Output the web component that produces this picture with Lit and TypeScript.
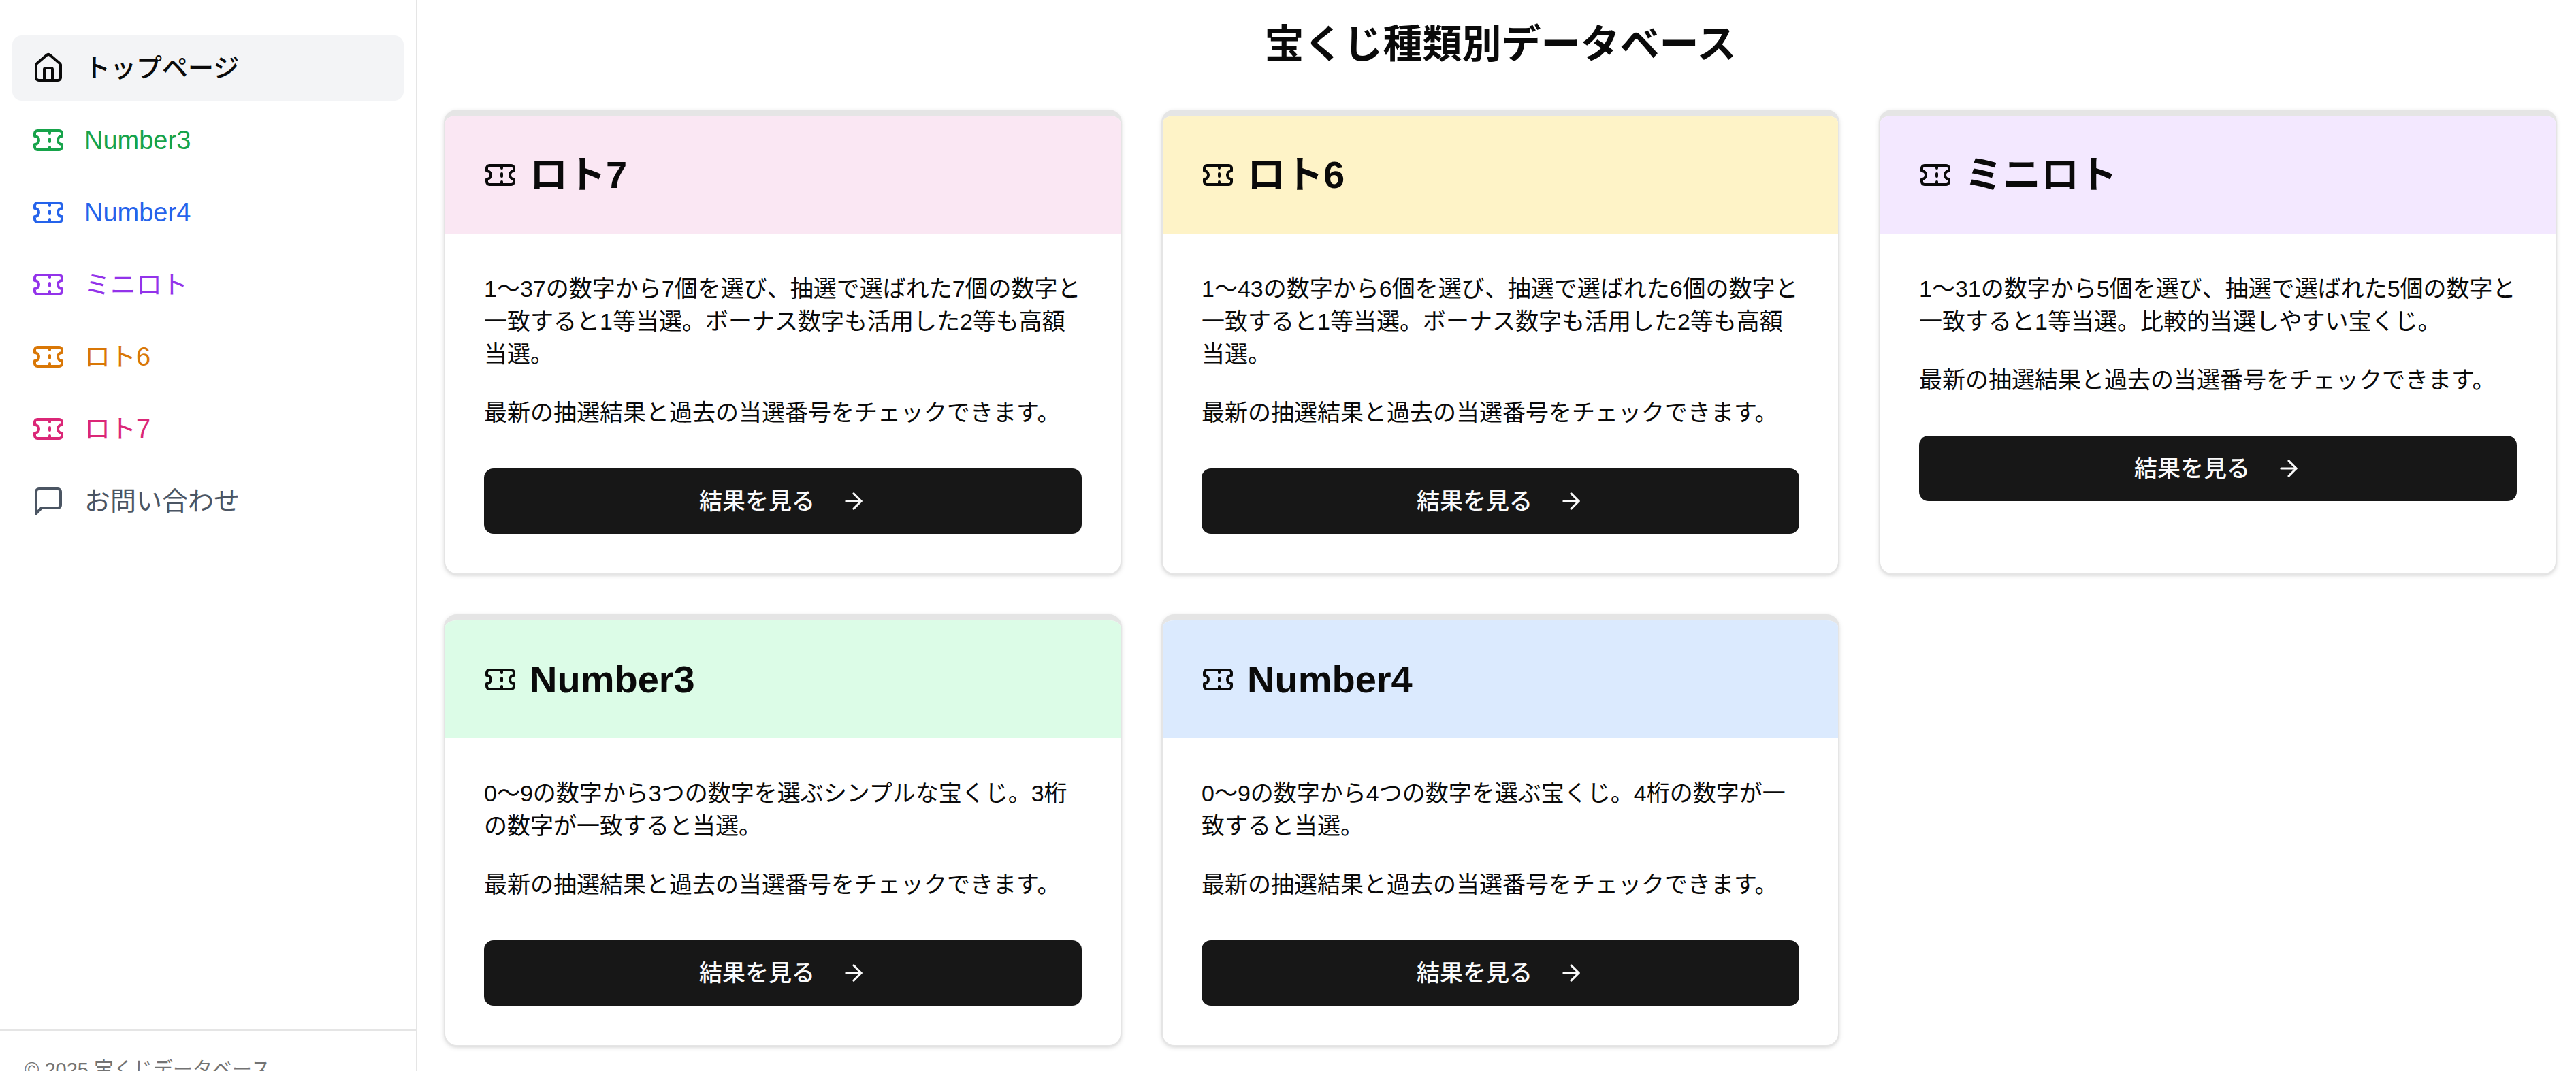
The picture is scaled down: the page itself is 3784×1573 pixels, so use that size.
import { LitElement, html, css, svg } from "lit";
import { customElement } from "lit/decorators.js";
import { classMap } from "lit/directives/class-map.js";

interface NavItem {
  label: string;
  icon: "home" | "ticket" | "message";
  tone: string;
  href: string;
}

interface Lottery {
  name: string;
  tone: string;
  description: string;
  href: string;
}

const NAV: NavItem[] = [
  { label: "トップページ", icon: "home", tone: "active", href: "#top" },
  { label: "Number3", icon: "ticket", tone: "green", href: "#number3" },
  { label: "Number4", icon: "ticket", tone: "blue", href: "#number4" },
  { label: "ミニロト", icon: "ticket", tone: "purple", href: "#miniloto" },
  { label: "ロト6", icon: "ticket", tone: "amber", href: "#loto6" },
  { label: "ロト7", icon: "ticket", tone: "pink", href: "#loto7" },
  { label: "お問い合わせ", icon: "message", tone: "gray", href: "#contact" },
];

const LOTTERIES: Lottery[] = [
  {
    name: "ロト7",
    tone: "pink",
    description:
      "1～37の数字から7個を選び、抽選で選ばれた7個の数字と一致すると1等当選。ボーナス数字も活用した2等も高額当選。",
    href: "#loto7",
  },
  {
    name: "ロト6",
    tone: "amber",
    description:
      "1～43の数字から6個を選び、抽選で選ばれた6個の数字と一致すると1等当選。ボーナス数字も活用した2等も高額当選。",
    href: "#loto6",
  },
  {
    name: "ミニロト",
    tone: "purple",
    description:
      "1～31の数字から5個を選び、抽選で選ばれた5個の数字と一致すると1等当選。比較的当選しやすい宝くじ。",
    href: "#miniloto",
  },
  {
    name: "Number3",
    tone: "green",
    description:
      "0～9の数字から3つの数字を選ぶシンプルな宝くじ。3桁の数字が一致すると当選。",
    href: "#number3",
  },
  {
    name: "Number4",
    tone: "blue",
    description:
      "0～9の数字から4つの数字を選ぶ宝くじ。4桁の数字が一致すると当選。",
    href: "#number4",
  },
];

const SHAPES = {
  home: svg`
    <path d="M15 21v-8a1 1 0 0 0-1-1h-4a1 1 0 0 0-1 1v8"></path>
    <path d="M3 10a2 2 0 0 1 .709-1.528l7-5.999a2 2 0 0 1 2.582 0l7 5.999A2 2 0 0 1 21 10v9a2 2 0 0 1-2 2H5a2 2 0 0 1-2-2z"></path>`,
  ticket: svg`
    <path d="M2 9a3 3 0 0 1 0 6v2a2 2 0 0 0 2 2h16a2 2 0 0 0 2-2v-2a3 3 0 0 1 0-6V7a2 2 0 0 0-2-2H4a2 2 0 0 0-2 2Z"></path>
    <path d="M13 5v2"></path>
    <path d="M13 17v2"></path>
    <path d="M13 11v2"></path>`,
  message: svg`
    <path d="M21 15a2 2 0 0 1-2 2H7l-4 4V5a2 2 0 0 1 2-2h14a2 2 0 0 1 2 2z"></path>`,
  arrow: svg`
    <path d="M5 12h14"></path>
    <path d="m12 5 7 7-7 7"></path>`,
};

const icon = (name: keyof typeof SHAPES, size = "large") => html`
  <svg class="icon ${size}" viewBox="0 0 24 24" aria-hidden="true">${SHAPES[name]}</svg>
`;

@customElement("app-root")
export class AppRoot extends LitElement {
  static styles = css`
    :host {
      display: block;
      background: #ffffff;
      color: #0a0a0a;
      font-family: "Liberation Sans", "Noto Sans CJK JP", sans-serif;
    }
    *,
    *::before,
    *::after {
      box-sizing: border-box;
    }
    h1,
    h2,
    p,
    ul {
      margin: 0;
      padding: 0;
    }
    a {
      color: inherit;
      text-decoration: none;
    }
    .shell {
      display: grid;
      grid-template-columns: 613px minmax(0, 1fr);
      height: 100vh;
      overflow: hidden;
    }
    .icon {
      flex: none;
      fill: none;
      stroke: currentColor;
      stroke-width: 2;
      stroke-linecap: round;
      stroke-linejoin: round;
    }
    .large {
      width: 48px;
      height: 48px;
    }
    .small {
      width: 38px;
      height: 38px;
    }

    /* The sidebar runs past the fold, so its footer is cut by the window. */
    .sidebar {
      display: flex;
      flex-direction: column;
      height: calc(100vh + 55px);
      border-right: 2px solid #e5e5e5;
    }
    .nav {
      flex: 1;
      padding: 52px 18px 0;
    }
    .nav-list {
      display: grid;
      gap: 10px;
      list-style: none;
    }
    .nav-link {
      display: flex;
      align-items: center;
      gap: 29px;
      height: 96px;
      padding: 0 29px;
      border-radius: 14px;
      font-size: 38px;
      line-height: 58px;
    }
    .nav-link.active {
      background: #f3f4f6;
      font-weight: 500;
    }
    .nav-link.green {
      color: #16a34a;
    }
    .nav-link.blue {
      color: #2563eb;
    }
    .nav-link.purple {
      color: #9333ea;
    }
    .nav-link.amber {
      color: #d97706;
    }
    .nav-link.pink {
      color: #db2777;
    }
    .nav-link.gray {
      color: #4b5563;
    }
    .footer {
      padding: 38px 36px;
      border-top: 2px solid #e5e5e5;
      color: #737373;
      font-size: 29px;
      line-height: 38px;
    }

    .main {
      padding: 29px 28px 29px 39px;
      overflow-y: auto;
    }
    .title {
      margin-bottom: 60px;
      font-size: 58px;
      font-weight: 700;
      line-height: 72px;
      text-align: center;
    }
    .cards {
      display: grid;
      grid-template-columns: repeat(3, minmax(0, 1fr));
      gap: 58px;
    }
    .card {
      overflow: hidden;
      border: 2px solid #e5e5e5;
      border-top-width: 9px;
      border-radius: 19px;
      background: #ffffff;
      box-shadow: 0 2px 7px rgb(0 0 0 / 0.1), 0 2px 5px -2px rgb(0 0 0 / 0.1);
    }
    .card-header {
      display: flex;
      align-items: center;
      gap: 19px;
      height: 173px;
      padding: 0 57px;
    }
    .card-header.pink {
      background: #fae7f3;
    }
    .card-header.amber {
      background: #fef3c7;
    }
    .card-header.purple {
      background: #f3e8ff;
    }
    .card-header.green {
      background: #dcfce7;
    }
    .card-header.blue {
      background: #dbeafe;
    }
    .card-title {
      font-size: 56px;
      font-weight: 700;
      line-height: 58px;
    }
    .card-body {
      padding: 57px 57px 58px;
      font-size: 34px;
      line-height: 48px;
    }
    .card-body p + p {
      margin-top: 38px;
    }
    .button {
      display: flex;
      align-items: center;
      justify-content: center;
      gap: 38px;
      height: 96px;
      margin-top: 58px;
      border-radius: 14px;
      background: #171717;
      color: #fafafa;
      font-weight: 500;
    }
  `;

  render() {
    return html`
      <div class="shell">
        <aside class="sidebar">
          <nav class="nav">
            <ul class="nav-list">
              ${NAV.map(
                (item) => html`
                  <li>
                    <a class=${classMap({ "nav-link": true, [item.tone]: true })} href=${item.href}>
                      ${icon(item.icon)}<span>${item.label}</span>
                    </a>
                  </li>
                `,
              )}
            </ul>
          </nav>
          <footer class="footer">© 2025 宝くじデータベース</footer>
        </aside>
        <main class="main">
          <h1 class="title">宝くじ種類別データベース</h1>
          <div class="cards">
            ${LOTTERIES.map(
              (lottery) => html`
                <article class="card">
                  <header class="card-header ${lottery.tone}">
                    ${icon("ticket")}
                    <h2 class="card-title">${lottery.name}</h2>
                  </header>
                  <div class="card-body">
                    <p>${lottery.description}</p>
                    <p>最新の抽選結果と過去の当選番号をチェックできます。</p>
                    <a class="button" href=${lottery.href}>
                      <span>結果を見る</span>${icon("arrow", "small")}
                    </a>
                  </div>
                </article>
              `,
            )}
          </div>
        </main>
      </div>
    `;
  }
}
